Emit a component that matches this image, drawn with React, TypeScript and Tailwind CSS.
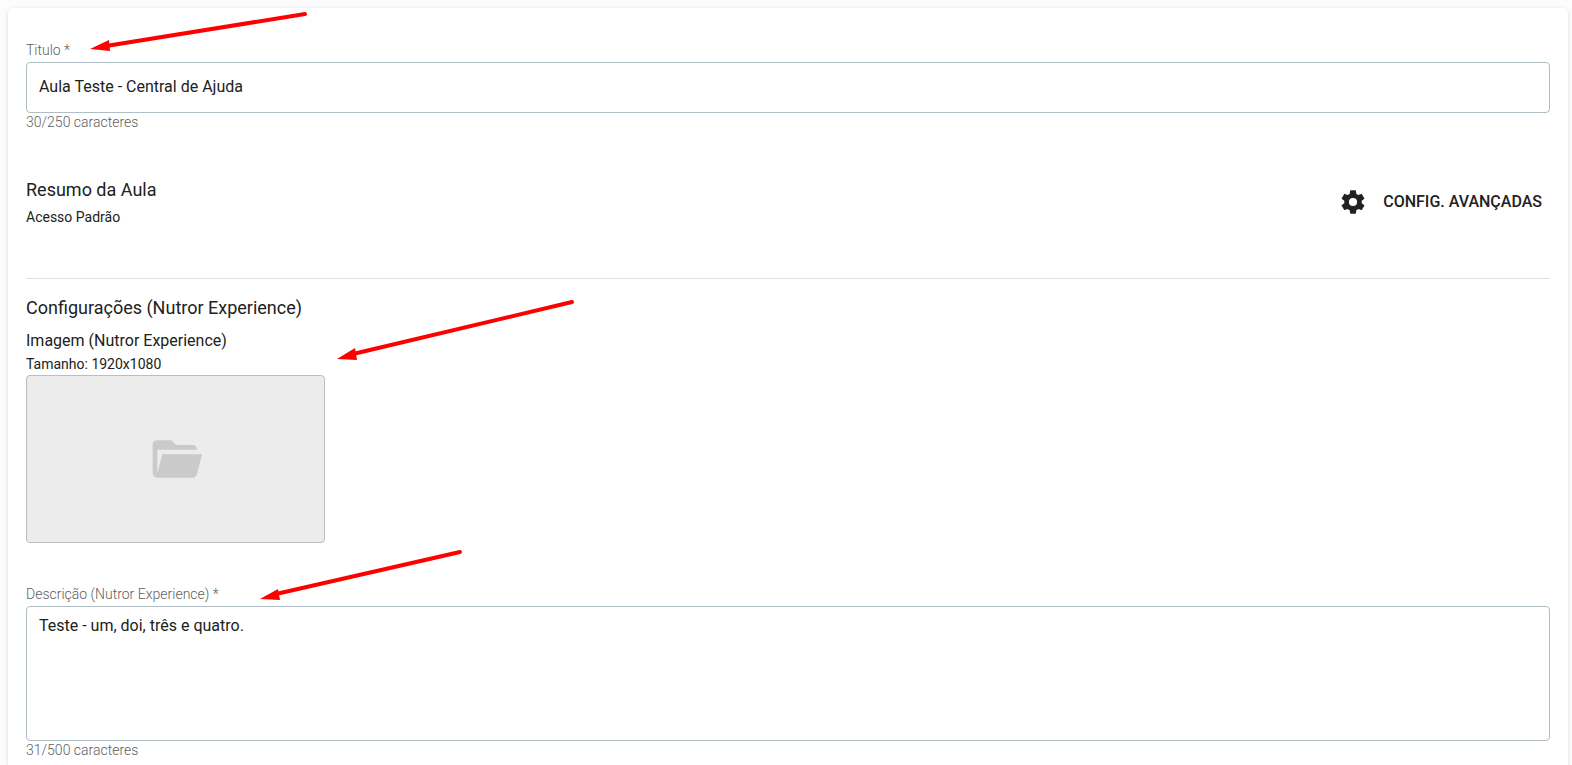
import { useState } from "react";

const COG_PATH =
  "M12,15.5A3.5,3.5 0 0,1 8.5,12A3.5,3.5 0 0,1 12,8.5A3.5,3.5 0 0,1 15.5,12A3.5,3.5 0 0,1 12,15.5M19.43,12.97C19.47,12.65 19.5,12.33 19.5,12C19.5,11.67 19.47,11.34 19.43,11L21.54,9.37C21.73,9.22 21.78,8.95 21.66,8.73L19.66,5.27C19.54,5.05 19.27,4.96 19.05,5.05L16.56,6.05C16.04,5.66 15.5,5.32 14.87,5.07L14.5,2.42C14.46,2.18 14.25,2 14,2H10C9.75,2 9.54,2.18 9.5,2.42L9.13,5.07C8.5,5.32 7.96,5.66 7.44,6.05L4.95,5.05C4.73,4.96 4.46,5.05 4.34,5.27L2.34,8.73C2.21,8.95 2.27,9.22 2.46,9.37L4.57,11C4.53,11.34 4.5,11.67 4.5,12C4.5,12.33 4.53,12.65 4.57,12.97L2.46,14.63C2.27,14.78 2.21,15.05 2.34,15.27L4.34,18.73C4.46,18.95 4.73,19.03 4.95,18.95L7.44,17.94C7.96,18.34 8.5,18.68 9.13,18.93L9.5,21.58C9.54,21.82 9.75,22 10,22H14C14.25,22 14.46,21.82 14.5,21.58L14.87,18.93C15.5,18.67 16.04,18.34 16.56,17.94L19.05,18.95C19.27,19.03 19.54,18.95 19.66,18.73L21.66,15.27C21.78,15.05 21.73,14.78 21.54,14.63L19.43,12.97Z";

const FOLDER_PATH =
  "M19,20H4C2.89,20 2,19.1 2,18V6C2,4.89 2.89,4 4,4H10L12,6H19A2,2 0 0,1 21,8H21L4,8V18L6.14,10H23.21L20.93,18.5C20.7,19.37 19.92,20 19,20Z";

type ArrowProps = {
  className: string;
  width: number;
  height: number;
  head: string;
  line: { x1: number; y1: number; x2: number; y2: number };
};

function Arrow({ className, width, height, head, line }: ArrowProps) {
  return (
    <svg
      className={`pointer-events-none absolute ${className}`}
      width={width}
      height={height}
      viewBox={`0 0 ${width} ${height}`}
      aria-hidden="true"
    >
      <line {...line} stroke="#ff0000" strokeWidth="4" strokeLinecap="round" />
      <polygon points={head} fill="#ff0000" />
    </svg>
  );
}

export default function App() {
  const [title, setTitle] = useState("Aula Teste - Central de Ajuda");
  const [description, setDescription] = useState("Teste - um, doi, três e quatro.");

  return (
    <div className="min-h-screen bg-[#fcfcfc] pt-2 pr-1 pl-2 font-['Roboto',sans-serif] text-[#212121]">
      <form className="min-h-[calc(100vh-8px)] rounded-t-md bg-white px-[18px] pt-8 shadow-[0_1px_4px_rgba(0,0,0,0.14)]">
        <div className="relative">
          <label htmlFor="title" className="block pb-0.5 text-sm leading-5 font-light text-[#606060]">
            Titulo *
          </label>
          <input
            id="title"
            type="text"
            value={title}
            onChange={(e) => setTitle(e.target.value)}
            className="block h-[51px] w-full rounded border border-[#b0bec5] px-3 pb-0.5 text-base outline-none"
          />
          <p className="text-sm leading-[18px] font-light text-[#606060]">30/250 caracteres</p>
          <Arrow
            className="-top-8 left-16"
            width={220}
            height={46}
            line={{ x1: 16, y1: 38, x2: 215, y2: 6 }}
            head="0,41 19,32 20,43"
          />
        </div>

        <section className="mt-9 flex items-start justify-between border-b border-[#dedede] pt-[9px] pb-12">
          <div>
            <h2 className="text-lg leading-7">Resumo da Aula</h2>
            <p className="text-sm leading-[26px]">Acesso Padrão</p>
          </div>
          <button type="button" className="mt-3 mr-2 flex items-center gap-4 text-base font-medium uppercase">
            <svg className="size-7" viewBox="0 0 24 24" fill="currentColor" aria-hidden="true">
              <path d={COG_PATH} />
            </svg>
            Config. Avançadas
          </button>
        </section>

        <section className="relative pt-[15px]">
          <h2 className="text-lg leading-7">Configurações (Nutror Experience)</h2>
          <h3 className="mt-1 text-base leading-[30px]">Imagem (Nutror Experience)</h3>
          <p className="pb-[3px] text-sm leading-4">Tamanho: 1920x1080</p>
          <button
            type="button"
            aria-label="Imagem"
            className="flex h-[168px] w-[299px] items-center justify-center rounded border border-[#bdbdbd] bg-[#ececec] text-[#cacaca]"
          >
            <svg className="size-14" viewBox="0 0 24 24" fill="currentColor" aria-hidden="true">
              <path d={FOLDER_PATH} />
            </svg>
          </button>
          <Arrow
            className="top-4 left-[311px]"
            width={242}
            height={70}
            line={{ x1: 16, y1: 59, x2: 235, y2: 7 }}
            head="0,64 18,53 20,65"
          />
        </section>

        <div className="relative mt-[41px]">
          <label htmlFor="description" className="block pb-0.5 text-sm leading-5 font-light text-[#606060]">
            Descrição (Nutror Experience) *
          </label>
          <textarea
            id="description"
            value={description}
            onChange={(e) => setDescription(e.target.value)}
            className="block h-[135px] w-full resize-none rounded border border-[#b0bec5] px-3 pt-[7px] text-base outline-none"
          />
          <p className="text-sm leading-[18px] font-light text-[#606060]">31/500 caracteres</p>
          <Arrow
            className="-top-9 left-[234px]"
            width={206}
            height={56}
            line={{ x1: 16, y1: 46, x2: 200, y2: 4 }}
            head="0,51 18,41 20,52"
          />
        </div>
      </form>
    </div>
  );
}
